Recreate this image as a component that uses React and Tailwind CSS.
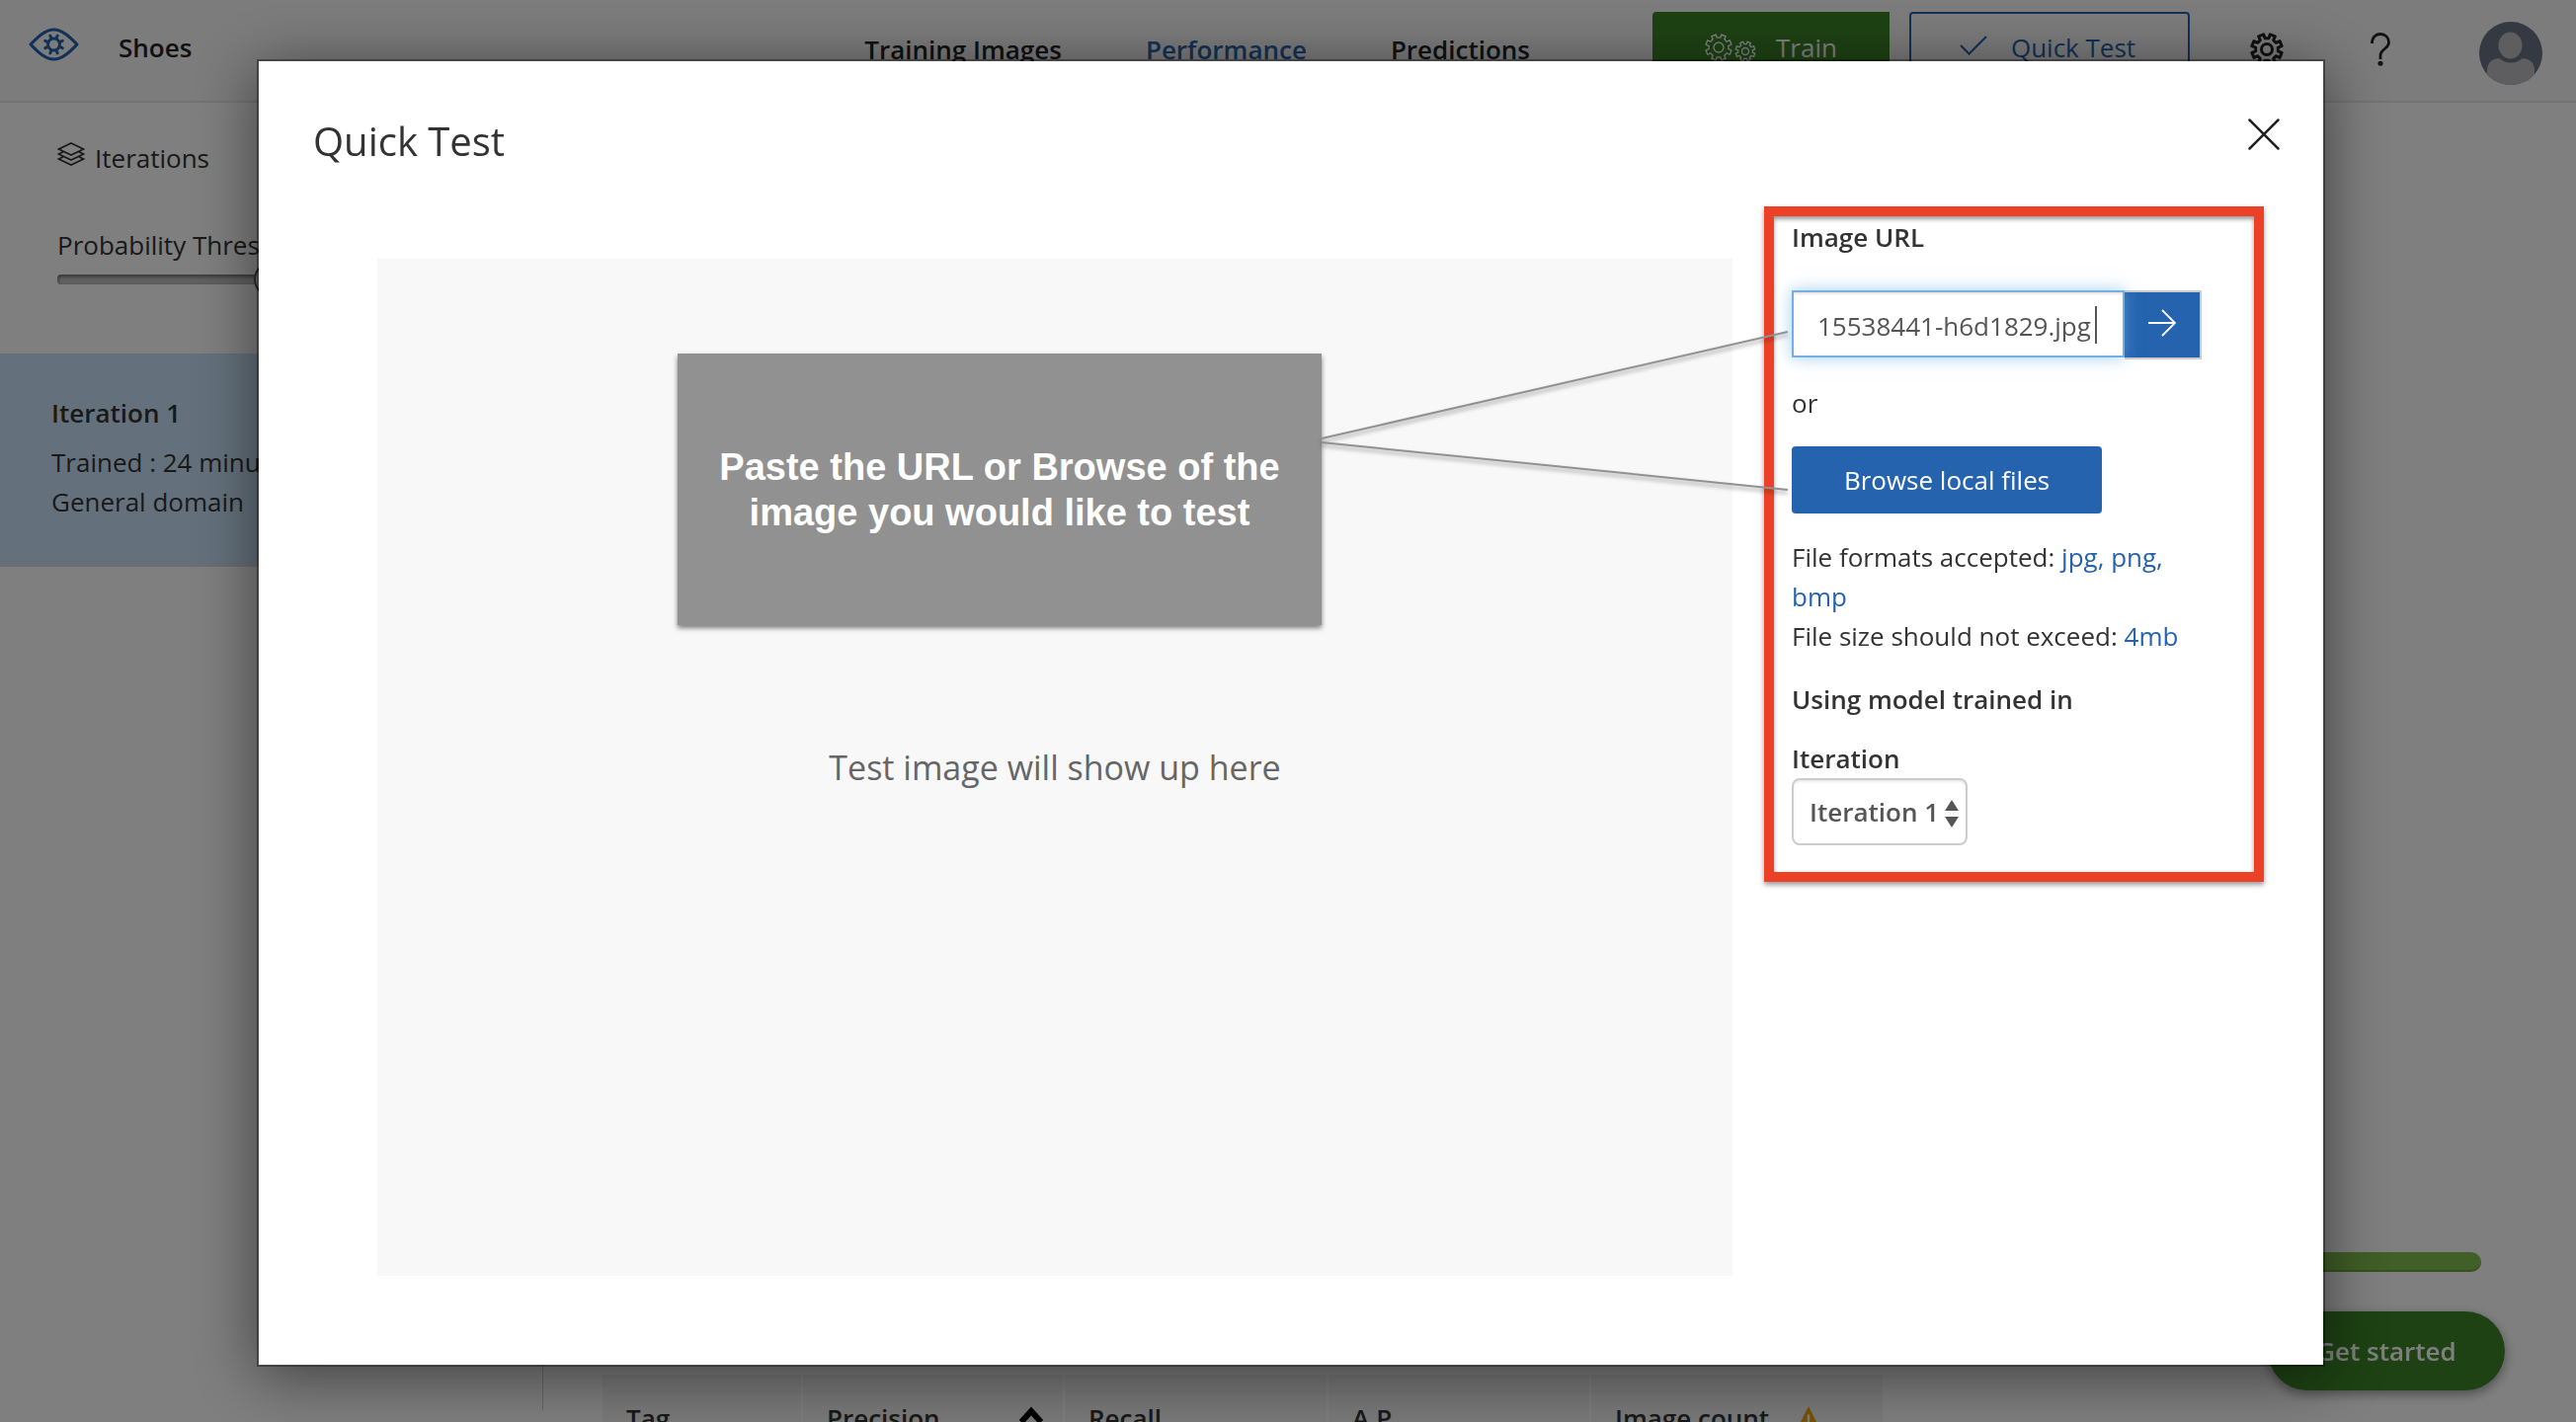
import React from "react";

function gearPath(cx, cy, inner, outer, rootDeg, tipDeg) {
  const pt = (r, deg) => {
    const a = (deg * Math.PI) / 180;
    return `${(cx + r * Math.cos(a)).toFixed(2)} ${(cy + r * Math.sin(a)).toFixed(2)}`;
  };
  const parts = [];
  for (let i = 0; i < 8; i++) {
    const a = i * 45 + 22.5;
    parts.push(`${i ? "L" : "M"}${pt(inner, a - rootDeg)}`, `L${pt(outer, a - tipDeg)}`, `L${pt(outer, a + tipDeg)}`, `L${pt(inner, a + rootDeg)}`);
  }
  return parts.join("") + "Z";
}

const GEAR = gearPath(17, 17, 11.5, 15.5, 13, 10);
const SMALL_GEAR = gearPath(41, 18, 7.5, 10, 13, 10);
const BIG_GEAR = gearPath(14, 14, 10, 13.3, 13, 10);

function EyeLogo() {
  return (
    <svg className="h-[34px] w-[51px]" viewBox="0 0 51 34" fill="none" stroke="#2563ae" strokeWidth="3" strokeLinejoin="round" aria-hidden="true">
      <path d="M2 17C8 11 16 2 25.500 2S43 11 49 17C43 23 35 32 25.500 32S8 23 2 17Z" />
      <circle cx="25.500" cy="17" r="6" />
      <path strokeLinecap="round" d="M28.200 10.500L29.200 8.200M32 14.300L34.300 13.300M32 19.700L34.300 20.700M28.200 23.500L29.200 25.800M22.800 23.500L21.800 25.800M19 19.700L16.700 20.700M19 14.300L16.700 13.300M22.800 10.500L21.800 8.200" />
    </svg>
  );
}

function LayersIcon() {
  return (
    <svg className="mb-2 h-6 w-7" viewBox="0 0 28 24" fill="none" stroke="#333" strokeWidth="1.700" aria-hidden="true">
      <path d="M14 1L26.500 7L14 13L1.500 7ZM6 9.800L1.500 12L14 18L26.500 12L22 9.800M6 14.800L1.500 17L14 23L26.500 17L22 14.800" />
    </svg>
  );
}

function Header() {
  return (
    <header className="flex h-[104px] items-start border-b-2 border-[#e6e6e6] bg-[#f8f8f8] pr-[34px] pl-[29px] font-semibold">
      <div className="flex flex-1 items-start gap-10 pt-7">
        <EyeLogo />
        <span className="text-[#222]">Shoes</span>
      </div>
      <nav className="flex gap-[85px] pt-[30px] text-[#222]">
        <a href="#training">Training Images</a>
        <a href="#performance" className="text-[#2563ae]">Performance</a>
        <a href="#predictions">Predictions</a>
      </nav>
      <div className="flex items-start pt-3 pl-[124px] font-normal">
        <button className="flex h-[72px] w-60 items-center justify-center gap-5 rounded-l-[4px] bg-[#3c8527] text-white">
          <svg className="h-7 w-[52px]" viewBox="0 0 52 28" fill="none" stroke="white" strokeWidth="1.400" strokeLinejoin="round" aria-hidden="true">
            <path d={BIG_GEAR} />
            <circle cx="14" cy="14" r="5" />
            <path d={SMALL_GEAR} />
            <circle cx="41" cy="18" r="3.500" />
          </svg>
          Train
        </button>
        <button className="ml-5 flex h-[72px] w-[284px] items-center justify-center gap-6 rounded-[4px] border-2 border-[#2563ae] pr-1 text-[#2563ae]">
          <svg className="h-7 w-7" viewBox="0 0 28 28" fill="none" stroke="currentColor" strokeWidth="2" aria-hidden="true">
            <path d="M1 12L9.500 20.500L27 3" />
          </svg>
          Quick Test
        </button>
        <button aria-label="Settings" className="ml-[61px] mt-[21px]">
          <svg className="h-[34px] w-[34px]" viewBox="0 0 34 34" fill="none" stroke="#222" strokeWidth="3" strokeLinejoin="round">
            <path d={GEAR} />
            <circle cx="17" cy="17" r="5.500" />
          </svg>
        </button>
        <button aria-label="Help" className="ml-[88px] mt-[21px]">
          <svg className="h-[34px] w-[20px]" viewBox="0 0 20 34" fill="none" stroke="#222" strokeWidth="2.800">
            <path d="M1.500 11C1.500 5 5 1.500 10 1.500S18.500 5 18.500 10C18.500 16 10 17 10 23V27" />
            <circle cx="10" cy="31.300" r="2.500" fill="#222" stroke="none" />
          </svg>
        </button>
        <button aria-label="Account" className="ml-[90px] mt-[10px]">
          <svg className="h-16 w-16" viewBox="0 0 64 64">
            <defs>
              <clipPath id="avatar"><circle cx="32" cy="32" r="32" /></clipPath>
            </defs>
            <g clipPath="url(#avatar)">
              <rect width="64" height="64" fill="#6a7383" />
              <path d="M8 64V50Q8 38 20 37Q32 46 44 37Q56 38 56 50V64Z" fill="#bcbdc0" />
              <ellipse cx="31.500" cy="24" rx="13" ry="14.500" fill="#bcbdc0" stroke="#6a7383" strokeWidth="2" />
            </g>
          </svg>
        </button>
      </div>
    </header>
  );
}

function Sidebar() {
  return (
    <aside className="mb-3 w-[550px] shrink-0 border-r border-[#cfcfcf] pt-9 text-[#333]">
      <div className="flex items-center gap-2.5 pl-[58px]">
        <LayersIcon />
        <h2>Iterations</h2>
      </div>
      <div className="mt-12 px-[58px]">
        <label htmlFor="threshold" className="block">Probability Threshold: 50%</label>
        <input
          id="threshold"
          type="range"
          defaultValue="50"
          className="mt-2.5 block h-2.5 w-full appearance-none rounded-[4px] bg-[#c4c4c4] shadow-[inset_0_2px_4px_rgba(0,0,0,0.5)] [&::-webkit-slider-thumb]:h-9 [&::-webkit-slider-thumb]:w-9 [&::-webkit-slider-thumb]:appearance-none [&::-webkit-slider-thumb]:rounded-full [&::-webkit-slider-thumb]:border-2 [&::-webkit-slider-thumb]:border-[#555] [&::-webkit-slider-thumb]:bg-white"
        />
      </div>
      <div className="mt-[70px] h-[216px] border-b-2 border-[#ddd] bg-[#c9e3f9] pt-10 pl-[52px]">
        <h3 className="font-semibold">Iteration 1</h3>
        <p className="mt-2.5">
          Trained : 24 minutes ago with
          <br />
          General domain
        </p>
      </div>
    </aside>
  );
}

function Performance() {
  const cell = "border-r-2 border-white pt-6 pl-6 text-left align-top font-semibold";
  return (
    <main className="flex min-w-0 flex-1 flex-col justify-end pl-[60px] text-[#333]">
      <div className="mr-24 h-5 rounded-full bg-[#82be4e] shadow-[inset_0_-2px_0_rgba(0,0,0,0.15)]" />
      <div className="mt-[104px] h-12 overflow-hidden">
        <table className="h-24 w-[1298px] table-fixed bg-[#f4f4f4]">
          <thead>
            <tr>
              <th className={cell + " w-[202px]"}>Tag</th>
              <th className={cell + " w-[265px]"}>
                <span className="flex items-center justify-between pr-5">
                  Precision
                  <svg className="h-6 w-6" viewBox="0 0 24 24" fill="none" stroke="black" strokeWidth="6" aria-hidden="true">
                    <path d="M2 16L12 5L22 16" />
                  </svg>
                </span>
              </th>
              <th className={cell + " w-[267px]"}>Recall</th>
              <th className={cell + " w-[266px]"}>A.P.</th>
              <th className={cell}>
                <span className="flex items-center gap-7">
                  Image count
                  <svg className="h-6 w-6" viewBox="0 0 20 20" aria-hidden="true">
                    <path d="M10 0L20 20H0Z" fill="#f0a30a" />
                    <path d="M10 7V14M10 16V18" stroke="white" strokeWidth="2" />
                  </svg>
                </span>
              </th>
            </tr>
          </thead>
        </table>
      </div>
    </main>
  );
}

function ImageArea() {
  return (
    <div className="relative mt-[53px] flex flex-1 items-center justify-center bg-[#f8f8f8]">
      <p className="text-[34px] text-[#666]">Test image will show up here</p>
      <div className="absolute top-24 right-[416px] flex h-[275px] w-[652px] items-center justify-center bg-[#919191] text-center font-['Liberation_Sans',sans-serif] text-[38px] leading-[46px] font-bold text-white shadow-[0_3px_5px_rgba(0,0,0,0.5)]">
        Paste the URL or Browse of the
        <br />
        image you would like to test
      </div>
      <svg className="absolute top-[58px] -right-14 z-10 h-[200px] w-[480px] drop-shadow-[0_3px_2px_rgba(0,0,0,0.4)]" viewBox="0 0 480 200" stroke="#919191" strokeWidth="2" aria-hidden="true">
        <path d="M8 124L480 16M8 128L480 176" />
      </svg>
    </div>
  );
}

function TestPanel() {
  return (
    <form className="w-[506px] shrink-0 self-start border-10 border-[#ec4126] pt-px pr-[53px] pb-[27px] pl-[18px] text-[#333] shadow-[0_3px_5px_rgba(0,0,0,0.4),inset_0_3px_4px_rgba(0,0,0,0.4)]">
      <label htmlFor="image-url" className="block font-semibold">Image URL</label>
      <div className="mt-[34px] flex items-start">
        <div className="relative w-[339px]">
          <input
            id="image-url"
            type="text"
            defaultValue="15538441-h6d1829.jpg"
            className="relative z-10 block h-[68px] w-full border-2 border-[#74aee2] bg-white pt-1 pl-6 text-[#555] caret-transparent shadow-[inset_0_2px_2px_rgba(0,0,0,0.1),0_0_16px_rgba(102,175,233,0.6)] outline-none"
          />
          <span className="absolute top-4 right-[28px] z-20 h-[38px] w-0.5 bg-[#555]" />
        </div>
        <button type="submit" aria-label="Test image URL" className="flex h-[70px] w-[78px] items-center justify-center border-2 border-l-0 border-[#ccc] bg-[#2563ae] pb-1">
          <svg className="h-7 w-7" viewBox="0 0 28 28" fill="none" stroke="white" strokeWidth="1.800" aria-hidden="true">
            <path d="M0 14H27M14 1L27 14L14 27" />
          </svg>
        </button>
      </div>
      <p className="mt-6">or</p>
      <button type="button" className="mt-6 block h-[68px] w-[314px] rounded-[4px] bg-[#2563ae] text-white">Browse local files</button>
      <p className="mt-6">
        File formats accepted: <span className="text-[#2563ae]">jpg, png,</span> <span className="text-[#2563ae]">bmp</span>
      </p>
      <p>
        File size should not exceed: <span className="text-[#2563ae]">4mb</span>
      </p>
      <p className="mt-6 font-semibold">Using model trained in</p>
      <label htmlFor="iteration" className="mt-5 block font-semibold">Iteration</label>
      <div className="relative w-[178px]">
        <select id="iteration" className="block h-[68px] w-full appearance-none rounded-[8px] border-2 border-[#ccc] bg-white pl-4 font-semibold text-[#555] shadow-[inset_0_2px_2px_rgba(0,0,0,0.08)]">
          <option>Iteration 1</option>
        </select>
        <svg className="pointer-events-none absolute top-[22px] right-[9px] h-7 w-[14px]" viewBox="0 0 14 28" fill="#555" aria-hidden="true">
          <path d="M7 0L14 11H0ZM0 17H14L7 28Z" />
        </svg>
      </div>
    </form>
  );
}

function QuickTestDialog() {
  return (
    <div className="fixed inset-0 flex bg-black/50 pt-[60px] pr-[254px] pb-[56px] pl-[260px]">
      <section role="dialog" aria-modal="true" aria-labelledby="dialog-title" className="flex flex-1 flex-col border-2 border-black/40 bg-white bg-clip-padding pr-[60px] pb-[90px] pl-[120px] shadow-[0_10px_60px_rgba(0,0,0,0.5)]">
        <div className="-mr-4 -ml-[65px] flex h-[147px] items-start justify-between">
          <h1 id="dialog-title" className="pt-[57px] text-[40px] leading-12 text-[#333]">Quick Test</h1>
          <button aria-label="Close" className="pt-[58px]">
            <svg className="h-8 w-8" viewBox="0 0 32 32" fill="none" stroke="#222" strokeWidth="2.500" strokeLinecap="round">
              <path d="M1.500 1.500L30.500 30.500M30.500 1.500L1.500 30.500" />
            </svg>
          </button>
        </div>
        <div className="flex flex-1 gap-8">
          <ImageArea />
          <TestPanel />
        </div>
      </section>
    </div>
  );
}

export default function App() {
  return (
    <div className="flex h-screen flex-col overflow-hidden bg-white font-['Open_Sans',sans-serif] text-[26px] leading-10">
      <Header />
      <div className="flex min-h-0 flex-1">
        <Sidebar />
        <Performance />
      </div>
      <button className="fixed right-[72px] bottom-8 h-20 w-60 rounded-full bg-[#3c8527] font-semibold text-white shadow-[0_4px_12px_rgba(0,0,0,0.4)]">Get started</button>
      <QuickTestDialog />
    </div>
  );
}
